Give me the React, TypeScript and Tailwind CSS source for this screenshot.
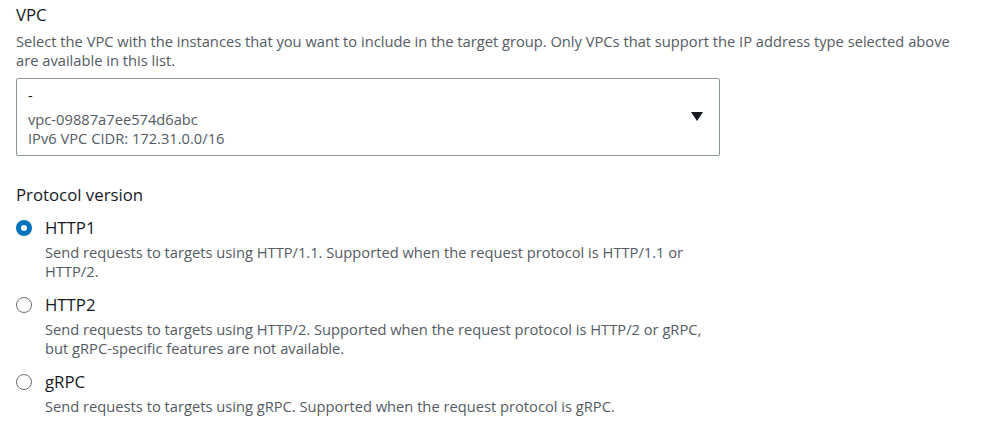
const options = [
  {
    id: 'http1',
    label: 'HTTP1',
    desc: ['Send requests to targets using HTTP/1.1. Supported when the request protocol is HTTP/1.1 or', 'HTTP/2.'],
  },
  {
    id: 'http2',
    label: 'HTTP2',
    desc: ['Send requests to targets using HTTP/2. Supported when the request protocol is HTTP/2 or gRPC,', 'but gRPC-specific features are not available.'],
  },
  {
    id: 'grpc',
    label: 'gRPC',
    desc: ['Send requests to targets using gRPC. Supported when the request protocol is gRPC.'],
  },
]

function Radio({ checked }: { checked: boolean }) {
  return checked ? (
    <span className="flex h-[16px] w-[16px] items-center justify-center rounded-full bg-[#0073bb]">
      <span className="h-[6px] w-[6px] rounded-full bg-white" />
    </span>
  ) : (
    <span className="block h-[16px] w-[16px] rounded-full border-[1.5px] border-[#687078] bg-white" />
  )
}

export default function App() {
  const selected = 'http1'
  return (
    <div className="min-h-screen bg-white px-4 pt-[4px] font-['Open_Sans',sans-serif] text-[#16191f]">
      <h3 className="text-[16.8px] leading-[22px]">VPC</h3>
      <p className="mt-[6px] max-w-[950px] text-[14.7px] leading-[19px] text-[#545b64]">
        Select the VPC with the instances that you want to include in the target group. Only VPCs that support the IP
        address type selected above are available in this list.
      </p>

      <div className="mt-[8px] flex w-[704px] items-center justify-between rounded-[2px] border border-[#879596] py-[7px] pl-[11px] pr-[14px]">
        <div className="text-[14.7px] leading-[19px]">
          <div>-</div>
          <div className="mt-[5px] text-[#545b64]">vpc-09887a7ee574d6abc</div>
          <div className="text-[#545b64]">IPv6 VPC CIDR: 172.31.0.0/16</div>
        </div>
        <svg width="12" height="10" viewBox="0 0 12 10" className="mr-[2px]">
          <path d="M0 0h12L6 9z" fill="#16191f" />
        </svg>
      </div>

      <h3 className="mt-[28px] text-[16.8px] leading-[22px]">Protocol version</h3>
      <div className="mt-[11px] flex flex-col gap-[13px]">
        {options.map((o) => (
          <div key={o.id} className="flex flex-col">
            <div className="flex items-center gap-[13px]">
              <Radio checked={o.id === selected} />
              <span className="text-[16.8px] leading-[22px]">{o.label}</span>
            </div>
            <div className="mt-[4px] pl-[29px] text-[14.7px] leading-[19px] text-[#545b64]">
              {o.desc.map((l) => (
                <div key={l}>{l}</div>
              ))}
            </div>
          </div>
        ))}
      </div>
    </div>
  )
}
